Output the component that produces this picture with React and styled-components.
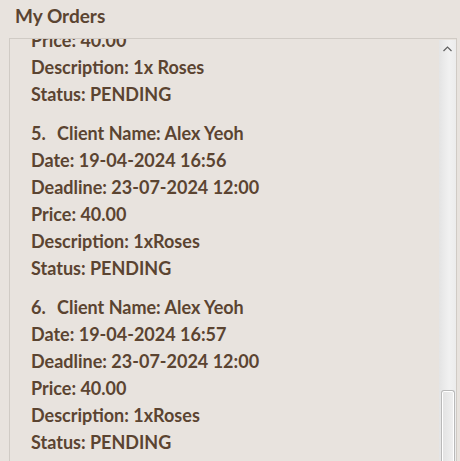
import React, { useEffect, useRef } from "react";
import styled, { createGlobalStyle } from "styled-components";

const Global = createGlobalStyle`
  html, body { margin: 0; padding: 0; background: #e8e3de; overflow: hidden; }
  body { font-family: "Lato", "Open Sans", sans-serif; color: #5b4431; }
`;

const Page = styled.div`
  height: 461px;
  display: flex;
  flex-direction: column;
  overflow: hidden;
`;

const Title = styled.h2`
  flex: none;
  margin: 0;
  height: 38px;
  padding: 3px 0 0 15px;
  box-sizing: border-box;
  font-size: 19px;
  font-weight: 700;
  line-height: 26px;
  color: #5b4431;
`;

const Box = styled.div`
  margin-left: 9px;
  width: 448px;
  height: 470px;
  flex: none;
  border-top: 1px solid #d0cbc5;
  border-left: 1px solid #d0cbc5;
  border-right: 1px solid #d0cbc5;
  box-sizing: border-box;
  display: flex;
`;

const List = styled.ol`
  flex: 1;
  margin: 0;
  list-style: none;
  padding: 8px 0 40px 21px;
  overflow-y: auto;
  scrollbar-width: none;
  &::-webkit-scrollbar { display: none; }
`;

const Item = styled.li`
  margin-bottom: 12px;
`;

const Line = styled.div`
  font-size: 18px;
  font-weight: 700;
  line-height: 27px;
  white-space: nowrap;
`;

const Num = styled.span`
  display: inline-block;
  width: 26px;
`;

const Scrollbar = styled.div`
  width: 17px;
  margin-top: 1px;
  flex: none;
  display: flex;
  flex-direction: column;
  background: linear-gradient(to right, #e4e4e4, #f1f1f1 60%, #ececec);
`;

const ArrowBtn = styled.div`
  height: 17px;
  display: flex;
  align-items: center;
  justify-content: center;
`;

const Track = styled.div`
  flex: 1;
  display: flex;
  flex-direction: column;
  padding: 333px 1px 0 2px;
`;

const Thumb = styled.div`
  flex: 1;
  border: 1px solid #b9b9b9;
  border-bottom: none;
  border-radius: 3px 3px 0 0;
  box-shadow: inset 0 0 0 1px #ffffff;
  background: linear-gradient(to right, #e2e2e2, #f0f0f0);
`;

const orders = [
  { date: "19-04-2024 16:40", desc: "1x Roses" },
  { date: "19-04-2024 16:45", desc: "1x Roses" },
  { date: "19-04-2024 16:50", desc: "1x Roses" },
  { date: "19-04-2024 16:53", desc: "1x Roses" },
  { date: "19-04-2024 16:56", desc: "1xRoses" },
  { date: "19-04-2024 16:57", desc: "1xRoses" },
];

export default function App() {
  const ref = useRef(null);
  useEffect(() => {
    if (ref.current) ref.current.scrollTop = 625;
  }, []);
  return (
    <Page>
      <Global />
      <Title>My Orders</Title>
      <Box>
        <List ref={ref}>
          {orders.map((o, i) => (
            <Item key={i}>
              <Line><Num>{i + 1}.</Num>Client Name: Alex Yeoh</Line>
              <Line>Date: {o.date}</Line>
              <Line>Deadline: 23-07-2024 12:00</Line>
              <Line>Price: 40.00</Line>
              <Line>Description: {o.desc}</Line>
              <Line>Status: PENDING</Line>
            </Item>
          ))}
        </List>
        <Scrollbar>
          <ArrowBtn>
            <svg width="9" height="6" viewBox="0 0 9 6">
              <path d="M0.5 5 L4.5 1 L8.5 5" fill="none" stroke="#606060" strokeWidth="1.2" />
            </svg>
          </ArrowBtn>
          <Track>
            <Thumb />
          </Track>
        </Scrollbar>
      </Box>
    </Page>
  );
}
